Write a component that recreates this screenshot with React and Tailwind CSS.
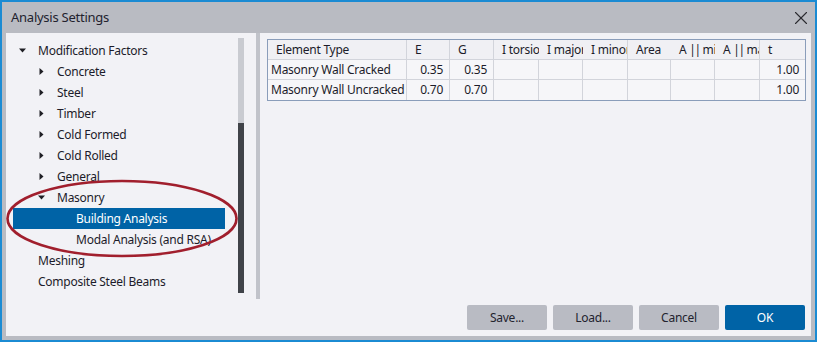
import { X } from 'lucide-react'

const tree = [
  { label: 'Modification Factors', level: 0, arrow: 'down' },
  { label: 'Concrete', level: 1, arrow: 'right' },
  { label: 'Steel', level: 1, arrow: 'right' },
  { label: 'Timber', level: 1, arrow: 'right' },
  { label: 'Cold Formed', level: 1, arrow: 'right' },
  { label: 'Cold Rolled', level: 1, arrow: 'right' },
  { label: 'General', level: 1, arrow: 'right' },
  { label: 'Masonry', level: 1, arrow: 'down' },
  { label: 'Building Analysis', level: 2, selected: true },
  { label: 'Modal Analysis (and RSA)', level: 2 },
  { label: 'Meshing', level: 0 },
  { label: 'Composite Steel Beams', level: 0 },
]

const indent = ['pl-[6px]', 'pl-[25px]', 'pl-[44px]']

const columns = [
  { label: 'Element Type', w: 'w-[139px]', line: true },
  { label: 'E', w: 'w-[43px]', line: true },
  { label: 'G', w: 'w-[44px]', line: true },
  { label: 'I torsion', w: 'w-[45px]' },
  { label: 'I major', w: 'w-[44px]' },
  { label: 'I minor', w: 'w-[45px]', line: true },
  { label: 'Area', w: 'w-[43px]' },
  { label: 'A || min', w: 'w-[44px]', pipes: 'min' },
  { label: 'A || major', w: 'w-[45px]', line: true, pipes: 'major' },
  { label: 't', w: 'w-[45px]' },
]

const rows = [
  ['Masonry Wall Cracked', '0.35', '0.35', '', '', '', '', '', '', '1.00'],
  ['Masonry Wall Uncracked', '0.70', '0.70', '', '', '', '', '', '', '1.00'],
]

export default function App() {
  return (
    <div
      className="w-[817px] h-[342px] border-2 border-[#1b8bd3] bg-[#b9bbc2] flex flex-col text-[12px] tracking-[-0.25px] text-[#1c1c2a]"
      style={{ fontFamily: '"Noto Sans", "Open Sans", sans-serif' }}
    >
      <div className="h-[31px] flex items-center justify-between pl-[9px] pr-[3px] shrink-0">
        <span className="text-[13px] text-[#22222e]">Analysis Settings</span>
        <X size={22} strokeWidth={1.2} className="text-[#2a2a30]" />
      </div>

      <div className="flex-1 mx-[4px] mb-[4px] bg-[#f2f2f6] flex">
        <div className="w-[250px] flex relative">
          <div className="flex-1 pt-[7px] pl-[7px]">
            {tree.map((item) => (
              <TreeRow key={item.label} {...item} />
            ))}
          </div>
          <div className="w-[6px] mt-[5px] h-[255px] bg-[#c9cbd1] flex flex-col justify-end mr-[12px]">
            <div className="h-[170px] bg-[#404349]" />
          </div>
          <svg
            className="absolute left-[-2px] top-[146px] pointer-events-none"
            width="236"
            height="80"
            viewBox="0 0 236 80"
          >
            <ellipse cx="118" cy="39.5" rx="114.5" ry="37.5" fill="none" stroke="#a11f2d" strokeWidth="2.6" />
          </svg>
        </div>

        <div className="w-[4px] h-[266px] bg-[#c1c3ca]" />

        <div className="flex-1 flex flex-col">
          <div className="pt-[6px] pl-[7px]">
            <div className="inline-flex flex-col border border-[#8a9dba]">
              <div className="flex h-[20px] bg-[#f0f0f4] border-b border-[#d2d4db]">
                {columns.map((c) => (
                  <div
                    key={c.label}
                    className={`${c.w} ${c.line ? 'border-r border-[#d2d4db]' : ''} pl-[8px] flex items-center whitespace-nowrap overflow-hidden`}
                  >
                    {c.pipes ? (
                      <span>
                        A <span className="tracking-[-1.5px]">||</span> {c.pipes}
                      </span>
                    ) : (
                      c.label
                    )}
                  </div>
                ))}
              </div>
              {rows.map((r, i) => (
                <div
                  key={r[0]}
                  className={`flex h-[20px] bg-[#f6f6f9] ${i === 0 ? 'border-b border-[#d2d4db]' : ''}`}
                >
                  {r.map((v, j) => (
                    <div
                      key={j}
                      className={`${columns[j].w} flex items-center whitespace-nowrap overflow-hidden ${
                        j === 0 ? 'pl-[3px]' : 'justify-end pr-[6px]'
                      } ${j < r.length - 1 ? 'border-r border-[#d2d4db]' : ''}`}
                    >
                      {v}
                    </div>
                  ))}
                </div>
              ))}
            </div>
          </div>

          <div className="mt-auto flex justify-end gap-[6px] pr-[6px] pb-[6px]">
            <DialogButton label="Save..." />
            <DialogButton label="Load..." />
            <DialogButton label="Cancel" />
            <DialogButton label="OK" primary />
          </div>
        </div>
      </div>
    </div>
  )
}

function TreeRow({ label, level, arrow, selected }) {
  return (
    <div
      className={`h-[21px] w-[212px] flex items-center ${indent[level]} ${
        selected ? 'bg-[#0063a6] text-white' : ''
      }`}
    >
      <span className="w-[19px] h-[21px] flex items-center shrink-0">
        {arrow === 'down' && (
          <svg width="7" height="7" viewBox="0 0 7 7">
            <polygon points="0,1.5 7,1.5 3.5,5.5" fill="#1e1e24" />
          </svg>
        )}
        {arrow === 'right' && (
          <svg width="7" height="7" viewBox="0 0 7 7">
            <polygon points="1.5,0 5.5,3.5 1.5,7" fill="#1e1e24" />
          </svg>
        )}
      </span>
      <span className="whitespace-nowrap">{label}</span>
    </div>
  )
}

function DialogButton({ label, primary }) {
  return (
    <button
      className={`w-[80px] h-[25px] rounded-[2px] flex items-center justify-center ${
        primary ? 'bg-[#0063a6] text-white' : 'bg-[#b9bbc3] text-[#23232e]'
      }`}
    >
      {label}
    </button>
  )
}
